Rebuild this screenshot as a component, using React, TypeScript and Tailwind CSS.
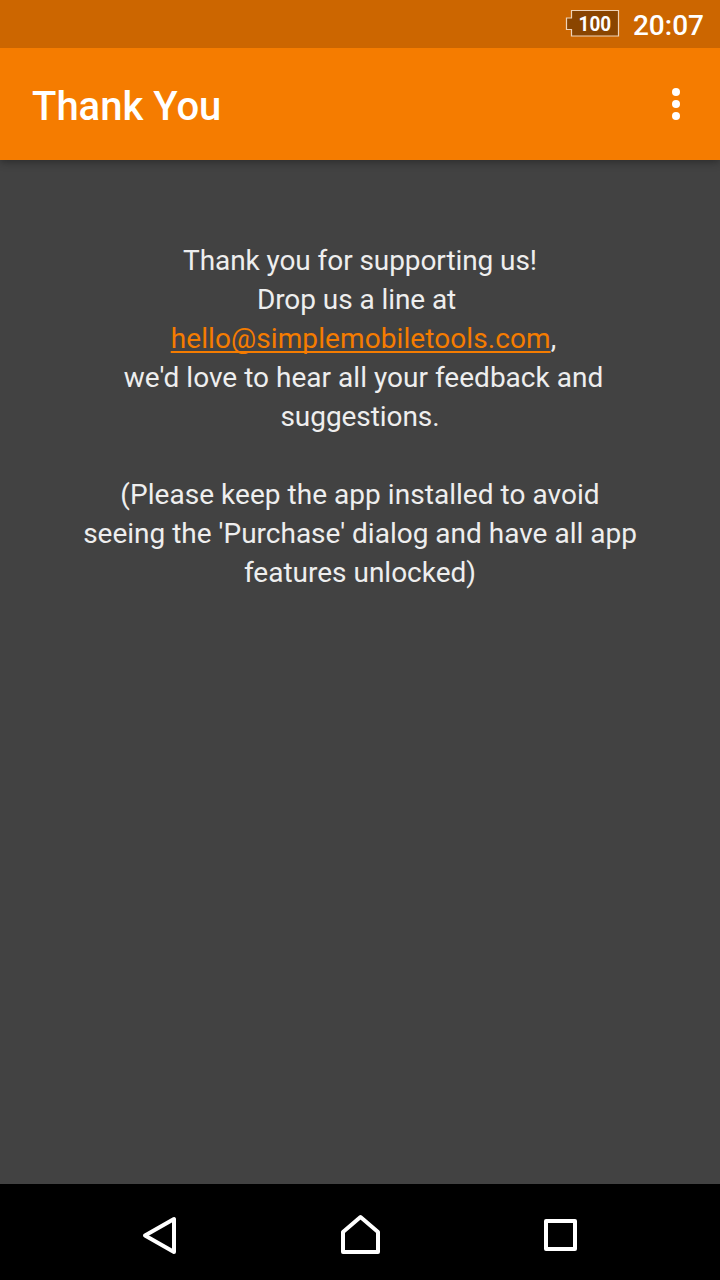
export default function App() {
  return (
    <div className="flex h-[1280px] w-[720px] flex-col overflow-hidden bg-[#424242] font-[Roboto,sans-serif]">
      <div className="z-20 flex h-12 shrink-0 items-start justify-end bg-[#cc6600] pr-4 text-white">
        <div className="relative mt-[9px] mr-[13px] flex h-7 w-[55px] items-center justify-center">
          <svg className="absolute inset-0" width="55" height="28" viewBox="0 0 55 28">
            <path d="M6.500 1.500H53.500V27H6.500V20.500H1.500V9H6.500Z" fill="#8a4500" stroke="#efd3b8" strokeWidth="1.200" />
          </svg>
          <span className="relative scale-x-90 pt-px pl-[5px] text-[21px] leading-7 font-bold">100</span>
        </div>
        <span className="pt-3 text-[28px] leading-7 font-medium">20:07</span>
      </div>
      <header className="z-10 flex h-28 shrink-0 items-center justify-between bg-[#f57c00] pr-9 pl-8 text-white shadow-[0_2px_8px_rgba(0,0,0,0.35)]">
        <h1 className="pt-[5px] text-[40px] leading-none font-medium">Thank You</h1>
        <svg width="16" height="40" viewBox="0 0 16 40" fill="white">
          <circle cx="8" cy="8" r="4" />
          <circle cx="8" cy="20" r="4" />
          <circle cx="8" cy="32" r="4" />
        </svg>
      </header>
      <main className="flex-1 pt-[81px] text-center text-[28px] leading-[39px] whitespace-pre text-[#eeeeee]">
        <p className="tracking-[-0.08px]">Thank you for supporting us!</p>
        <p className="tracking-[-0.07px]">{"Drop us a line at "}</p>
        <p className="tracking-[0.09px]">
          {" "}
          <span className="text-[#f57c00] underline decoration-2 underline-offset-[3px] [text-decoration-skip-ink:none]">hello@simplemobiletools.com</span>,
        </p>
        <p className="tracking-[0.02px]">{" we'd love to hear all your feedback and"}</p>
        <p className="tracking-[-0.07px]">suggestions.</p>
        <p className="mt-[39px] tracking-[0.04px]">(Please keep the app installed to avoid</p>
        <p>seeing the 'Purchase' dialog and have all app</p>
        <p>features unlocked)</p>
      </main>
      <nav className="flex h-24 shrink-0 items-center justify-center gap-[120px] bg-black">
        <svg width="80" height="96" viewBox="0 0 80 96" fill="none" stroke="white" strokeWidth="4" strokeLinejoin="round">
          <path d="M54 35V68L25 51.500Z" />
        </svg>
        <svg width="80" height="96" viewBox="0 0 80 96" fill="none" stroke="white" strokeWidth="4" strokeLinejoin="round">
          <path d="M23 68V48L40.500 33L58 48V68Z" />
        </svg>
        <svg width="80" height="96" viewBox="0 0 80 96" fill="none" stroke="white" strokeWidth="4" strokeLinejoin="round">
          <path d="M26 37H55V65H26Z" />
        </svg>
      </nav>
    </div>
  );
}
